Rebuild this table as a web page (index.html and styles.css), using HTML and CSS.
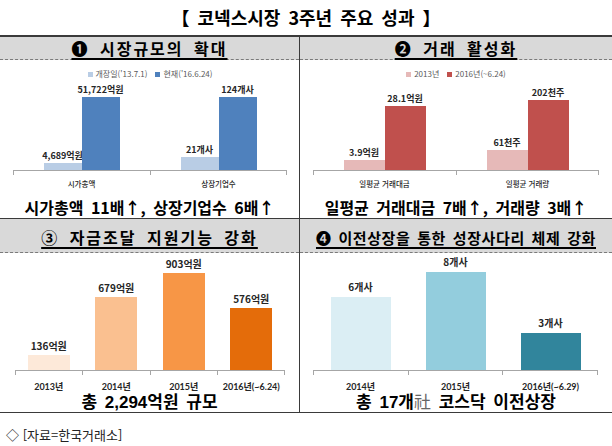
FILE: index.html
```html
<!DOCTYPE html>
<html lang="ko">
<head>
<meta charset="utf-8">
<title>코넥스시장 3주년 주요 성과</title>
<link rel="stylesheet" href="styles.css">
</head>
<body>
<h1 class="title">【 코넥스시장 3주년 주요 성과 】</h1>
<div class="board">
  <div class="row row-top">
    <section class="panel panel-left">
      <h2 class="head"><span>❶ 시장규모의 확대</span></h2>
      <div class="chart chart-1">
        <div class="legend">
          <span class="key"><i class="sw c1-light"></i>개장일('13.7.1)</span>
          <span class="key"><i class="sw c1-dark"></i>현재('16.6.24)</span>
        </div>
        <div class="plot">
          <div class="group">
            <div class="col"><span class="val">4,689억원</span><div class="bar c1-light" style="height:7px"></div></div>
            <div class="col"><span class="val">51,722억원</span><div class="bar c1-dark" style="height:73px"></div></div>
          </div>
          <div class="group">
            <div class="col"><span class="val">21개사</span><div class="bar c1-light" style="height:13px"></div></div>
            <div class="col"><span class="val">124개사</span><div class="bar c1-dark" style="height:73px"></div></div>
          </div>
        </div>
        <div class="ticks"><i></i><i></i></div>
        <div class="cats"><span>시가총액</span><span>상장기업수</span></div>
      </div>
      <p class="summary">시가총액 11배↑, 상장기업수 6배↑</p>
    </section>
    <section class="panel">
      <h2 class="head"><span>❷ 거래 활성화</span></h2>
      <div class="chart chart-2">
        <div class="legend">
          <span class="key"><i class="sw c2-light"></i>2013년</span>
          <span class="key"><i class="sw c2-dark"></i>2016년(~6.24)</span>
        </div>
        <div class="plot">
          <div class="group">
            <div class="col"><span class="val">3.9억원</span><div class="bar c2-light" style="height:10px"></div></div>
            <div class="col"><span class="val">28.1억원</span><div class="bar c2-dark" style="height:64px"></div></div>
          </div>
          <div class="group">
            <div class="col"><span class="val">61천주</span><div class="bar c2-light" style="height:20px"></div></div>
            <div class="col"><span class="val">202천주</span><div class="bar c2-dark" style="height:70px"></div></div>
          </div>
        </div>
        <div class="ticks"><i></i><i></i></div>
        <div class="cats"><span>일평균 거래대금</span><span>일평균 거래량</span></div>
      </div>
      <p class="summary">일평균 거래대금 7배↑, 거래량 3배↑</p>
    </section>
  </div>
  <div class="row row-bottom">
    <section class="panel panel-left">
      <h2 class="head"><span>③ 자금조달 지원기능 강화</span></h2>
      <div class="chart chart-3">
        <div class="plot">
          <div class="group"><div class="col"><span class="val">136억원</span><div class="bar c3-a" style="height:15px"></div></div></div>
          <div class="group"><div class="col"><span class="val">679억원</span><div class="bar c3-b" style="height:73px"></div></div></div>
          <div class="group"><div class="col"><span class="val">903억원</span><div class="bar c3-c" style="height:97px"></div></div></div>
          <div class="group"><div class="col"><span class="val">576억원</span><div class="bar c3-d" style="height:62px"></div></div></div>
        </div>
        <div class="ticks"><i></i><i></i><i></i><i></i></div>
        <div class="cats"><span>2013년</span><span>2014년</span><span>2015년</span><span>2016년(~6.24)</span></div>
      </div>
      <p class="summary">총 2,294억원 규모</p>
    </section>
    <section class="panel">
      <h2 class="head head-tight"><span>❹ 이전상장을 통한 성장사다리 체제 강화</span></h2>
      <div class="chart chart-4">
        <div class="plot">
          <div class="group"><div class="col"><span class="val">6개사</span><div class="bar c4-a" style="height:73px"></div></div></div>
          <div class="group"><div class="col"><span class="val">8개사</span><div class="bar c4-b" style="height:98px"></div></div></div>
          <div class="group"><div class="col"><span class="val">3개사</span><div class="bar c4-c" style="height:37px"></div></div></div>
        </div>
        <div class="ticks"><i></i><i></i><i></i></div>
        <div class="cats"><span>2014년</span><span>2015년</span><span>2016년(~6.29)</span></div>
      </div>
      <p class="summary">총 17개<span class="light">社</span> 코스닥 이전상장</p>
    </section>
  </div>
</div>
<p class="source">◇ [자료=한국거래소]</p>
</body>
</html>
```

FILE: styles.css
```css
* { box-sizing: border-box; }
html, body { margin: 0; padding: 0; background: #fff; }
body {
  width: 612px;
  font-family: "Noto Sans CJK KR", "Noto Sans", sans-serif;
  color: #000;
}

.title {
  margin: 0;
  height: 35px;
  line-height: 35px;
  text-align: center;
  font-size: 18px;
  font-weight: 700;
  word-spacing: 3px;
}

.board {
  border-top: 2px solid #3a3a3a;
  border-bottom: 1px solid #3a3a3a;
}
.row { display: grid; grid-template-columns: 300px 312px; }
.row-bottom { border-top: 1px solid #3a3a3a; }

.panel { display: flex; flex-direction: column; }
.panel-left { border-right: 1px solid #3a3a3a; }

.head {
  margin: 0;
  display: flex;
  justify-content: center;
  align-items: center;
  background: #d9d9d9;
  border-bottom: 1px dashed #7a7a7a;
  font-size: 16px;
  font-weight: 700;
  letter-spacing: 2px;
  word-spacing: 4px;
  white-space: nowrap;
}
.head span {
  line-height: 1;
  text-decoration: underline;
  text-decoration-thickness: 1.5px;
  text-underline-offset: 3px;
}
.row-top .head { height: 23px; }
.row-bottom .head { height: 34px; padding-top: 3px; }
.head-tight { font-size: 15px; letter-spacing: 0.6px; word-spacing: 2px; }

.chart { display: flex; flex-direction: column; }
.row-top .chart { height: 136px; padding-top: 8px; }
.row-bottom .chart { height: 140px; }
.chart-1 { padding-left: 13px; padding-right: 12px; }
.chart-2 { padding-left: 13px; padding-right: 13px; }
.chart-3 { padding-left: 15px; padding-right: 14px; }
.chart-4 { padding-left: 13px; padding-right: 14px; }

.legend {
  height: 12px;
  display: flex;
  justify-content: center;
  align-items: center;
  gap: 8px;
  font-size: 8px;
  line-height: 12px;
  color: #595959;
}
.key { display: flex; align-items: center; gap: 3px; }
.sw { display: block; width: 5px; height: 5px; }

.plot {
  display: flex;
  align-items: flex-end;
  border-bottom: 1px solid #a6a6a6;
}
.row-top .plot { height: 91px; }
.row-bottom .plot { height: 118px; }

.group {
  flex: 1;
  display: flex;
  justify-content: center;
  align-items: flex-end;
}
.col { display: flex; flex-direction: column; align-items: center; }
.chart-1 .col { width: 38px; }
.chart-2 .col { width: 41px; }
.chart-3 .col { width: 42px; }
.chart-4 .col { width: 60px; }

.val {
  white-space: nowrap;
  font-weight: 700;
  color: #262626;
  font-size: 9px;
  line-height: 11px;
  margin-bottom: 2px;
}
.row-bottom .val { font-size: 10px; line-height: 12px; margin-bottom: 3px; }
.chart-4 .val { margin-bottom: 4px; }
.bar { width: 100%; }

.ticks { display: flex; height: 4px; }
.ticks i { flex: 1; border-left: 1px solid #a6a6a6; }
.ticks i:last-child { border-right: 1px solid #a6a6a6; }

.cats { display: flex; color: #262626; white-space: nowrap; }
.cats span { flex: 1; text-align: center; }
.row-top .cats { margin-top: 2px; height: 13px; line-height: 13px; font-size: 7.5px; font-weight: 500; }
.row-bottom .cats {
  margin-top: 6px;
  height: 12px;
  line-height: 12px;
  font-family: Lato, "Noto Sans CJK KR", sans-serif;
  font-size: 9px;
  font-weight: 700;
}

.summary {
  margin: 0;
  text-align: center;
  font-weight: 700;
  word-spacing: 3px;
  white-space: nowrap;
}
.row-top .summary { height: 22px; line-height: 22px; font-size: 16px; }
.row-bottom .summary {
  height: 19px;
  line-height: 19px;
  font-family: "Liberation Sans", "Noto Sans CJK KR", sans-serif;
  font-size: 17px;
}
.light { font-weight: 400; color: #666; }

.source {
  margin: 14px 0 0 6px;
  font-size: 13px;
  line-height: 16px;
  color: #222;
}

.c1-light { background: #b9cde5; }
.c1-dark { background: #4f81bd; }
.c2-light { background: #e6b9b8; }
.c2-dark { background: #c0504d; }
.c3-a { background: #fde9d9; }
.c3-b { background: #fac090; }
.c3-c { background: #f79646; }
.c3-d { background: #e46c0a; }
.c4-a { background: #dbeef4; }
.c4-b { background: #93cddd; }
.c4-c { background: #31859c; }
```
